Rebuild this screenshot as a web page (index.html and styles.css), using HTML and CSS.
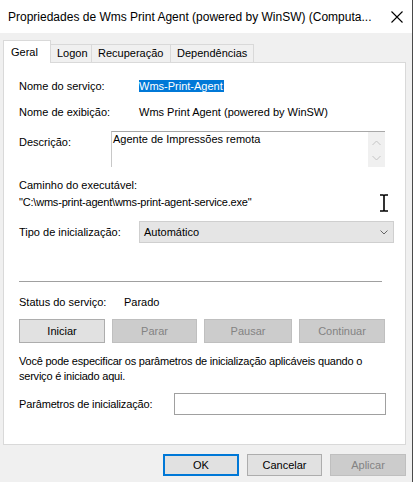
FILE: index.html
```html
<!DOCTYPE html>
<html lang="pt">
<head>
<meta charset="utf-8">
<title>Propriedades</title>
<link rel="stylesheet" href="styles.css">
</head>
<body>
<div class="window">
  <div class="titlebar">
    <span class="title">Propriedades de Wms Print Agent (powered by WinSW) (Computa...</span>
    <svg class="close" width="12" height="12" viewBox="0 0 12 12"><path d="M0.5 0.5 L11.5 11.5 M11.5 0.5 L0.5 11.5" stroke="#000" stroke-width="1.1" fill="none"/></svg>
  </div>
  <div class="tabs">
    <div class="tab active">Geral</div>
    <div class="tab">Logon</div>
    <div class="tab">Recuperação</div>
    <div class="tab">Dependências</div>
  </div>
  <div class="panel">
    <div class="row">
      <span class="label">Nome do serviço:</span>
      <span class="value"><span class="selected">Wms-Print-Agent</span></span>
    </div>
    <div class="row r2">
      <span class="label">Nome de exibição:</span>
      <span class="value">Wms Print Agent (powered by WinSW)</span>
    </div>
    <div class="desc-row">
      <span class="label desc-label">Descrição:</span>
      <div class="textarea">
        <span class="ta-text">Agente de Impressões remota</span>
        <div class="scrollbar">
          <svg width="9" height="6" viewBox="0 0 9 6"><path d="M0.5 5 L4.5 1 L8.5 5" stroke="#c4c4c4" fill="none"/></svg>
          <svg width="9" height="6" viewBox="0 0 9 6"><path d="M0.5 1 L4.5 5 L8.5 1" stroke="#c4c4c4" fill="none"/></svg>
        </div>
      </div>
    </div>
    <div class="path-block">
      <div class="line">Caminho do executável:</div>
      <div class="path-row">
        <span class="line path">"C:\wms-print-agent\wms-print-agent-service.exe"</span>
        <svg class="ibeam" width="10" height="18" viewBox="0 0 10 18"><path d="M1 1 H4 M6 1 H9 M5 1.5 V16.5 M1 17 H4 M6 17 H9 M4 1 Q5 1.2 5 2 Q5 1.2 6 1 M4 17 Q5 16.8 5 16 Q5 16.8 6 17" stroke="#000" stroke-width="1.6" fill="none"/></svg>
      </div>
    </div>
    <div class="row combo-row">
      <span class="label">Tipo de inicialização:</span>
      <div class="combo">
        <span>Automático</span>
        <svg width="8" height="5" viewBox="0 0 8 5"><path d="M0.5 0.5 L4 4 L7.5 0.5" stroke="#666" fill="none"/></svg>
      </div>
    </div>
    <div class="separator"></div>
    <div class="row status-row">
      <span class="label status-label">Status do serviço:</span>
      <span>Parado</span>
    </div>
    <div class="svc-buttons">
      <div class="btn">Iniciar</div>
      <div class="btn disabled">Parar</div>
      <div class="btn disabled">Pausar</div>
      <div class="btn disabled">Continuar</div>
    </div>
    <p class="para">Você pode especificar os parâmetros de inicialização aplicáveis quando o serviço é iniciado aqui.</p>
    <div class="row params-row">
      <span class="label params-label">Parâmetros de inicialização:</span>
      <div class="input"></div>
    </div>
  </div>
  <div class="dialog-buttons">
    <div class="btn dbtn default">OK</div>
    <div class="btn dbtn">Cancelar</div>
    <div class="btn dbtn disabled">Aplicar</div>
  </div>
</div>
</body>
</html>
```

FILE: styles.css
```css
* { box-sizing: border-box; }
html, body { margin: 0; padding: 0; background: #ffffff; }
body {
  font-family: "Liberation Sans", Arial, sans-serif;
  font-size: 11px;
  color: #000;
  width: 415px;
  height: 482px;
  overflow: hidden;
}
.window {
  width: 413px;
  height: 482px;
  background: #f0f0f0;
  border-right: 1px solid #4a4a4a;
}
.titlebar {
  height: 33px;
  background: #ffffff;
  display: flex;
  align-items: center;
  padding-left: 8px;
  padding-right: 9px;
  justify-content: space-between;
}
.title {
  font-size: 12px;
  white-space: nowrap;
  padding-top: 1px;
}
.tabs {
  display: flex;
  align-items: flex-end;
  margin-left: 3px;
  height: 29px;
  position: relative;
  z-index: 1;
}
.tab {
  height: 18px;
  border: 1px solid #d9d9d9;
  border-left: none;
  border-bottom: none;
  background: #f0f0f0;
  padding: 0 6px;
  line-height: 17px;
}
.tab.active {
  height: 23px;
  width: 48px;
  background: #fff;
  border-left: 1px solid #d9d9d9;
  margin-bottom: -1px;
  padding: 3px 0 0 7px;
}
.tab:nth-child(2) { width: 41px; }
.tab:nth-child(3) { width: 79px; }
.tab:nth-child(4) { width: 83px; }
.panel {
  margin-left: 3px;
  width: 403px;
  height: 383px;
  background: #fff;
  border: 1px solid #d9d9d9;
  padding: 16px 0 0 15px;
}
.row {
  display: flex;
  align-items: center;
  line-height: 14px;
}
.label { width: 120px; flex: none; white-space: nowrap; }
.value { white-space: nowrap; }
.selected {
  background: #0078d7;
  color: #fff;
  display: inline-block;
  line-height: 12px;
  padding-right: 1px;
}
.r2 { margin-top: 12px; }
.desc-row {
  display: flex;
  margin-top: 12px;
  align-items: flex-start;
}
.desc-label { width: 92px; padding-top: 4px; line-height: 14px; }
.textarea {
  width: 274px;
  height: 36px;
  border-top: 1px solid #a8a8a8;
  border-left: 1px solid #c8c8c8;
  display: flex;
  justify-content: space-between;
}
.ta-text { padding: 1px 0 0 1px; line-height: 13px; }
.scrollbar {
  width: 17px;
  background: #f0f0f0;
  display: flex;
  flex-direction: column;
  align-items: center;
  justify-content: space-around;
  padding: 3px 0 2px;
}
.path-block { margin-top: 11px; }
.line { line-height: 14px; }
.path { letter-spacing: -0.2px; }
.path-row {
  display: flex;
  justify-content: space-between;
  align-items: flex-start;
  margin-top: 3px;
  width: 370px;
}
.ibeam { margin-top: -1px; }
.combo-row { margin-top: 9px; }
.combo {
  width: 255px;
  height: 22px;
  background: #e5e5e5;
  border: 1px solid #cfcfcf;
  display: flex;
  align-items: center;
  justify-content: space-between;
  padding: 0 5px 0 4px;
}
.separator {
  margin-top: 38px;
  width: 363px;
  height: 1px;
  background: #a0a0a0;
}
.status-row { margin-top: 13px; }
.status-label { width: 105px; }
.svc-buttons {
  display: grid;
  grid-template-columns: 86px 85px 88px 86px;
  column-gap: 7px;
  margin-top: 10px;
}
.btn {
  height: 24px;
  background: #e1e1e1;
  border: 1px solid #adadad;
  display: flex;
  align-items: center;
  justify-content: center;
}
.btn.disabled {
  background: #cccccc;
  border-color: #bfbfbf;
  color: #838383;
}
.para {
  margin: 11px 0 0;
  line-height: 15px;
  width: 366px;
  letter-spacing: -0.22px;
}
.params-row { margin-top: 9px; }
.params-label { width: 155px; letter-spacing: -0.15px; }
.input {
  width: 212px;
  height: 22px;
  border: 1px solid #a0a0a0;
  background: #fff;
}
.dialog-buttons {
  display: flex;
  justify-content: flex-end;
  gap: 8px;
  margin-top: 9px;
  padding-right: 6px;
}
.dbtn { width: 76px; height: 22px; }
.dbtn:nth-child(2) { width: 75px; }
.dbtn.default { border: 1px solid #0078d7; box-shadow: inset 0 0 0 1px #0078d7; }
```
